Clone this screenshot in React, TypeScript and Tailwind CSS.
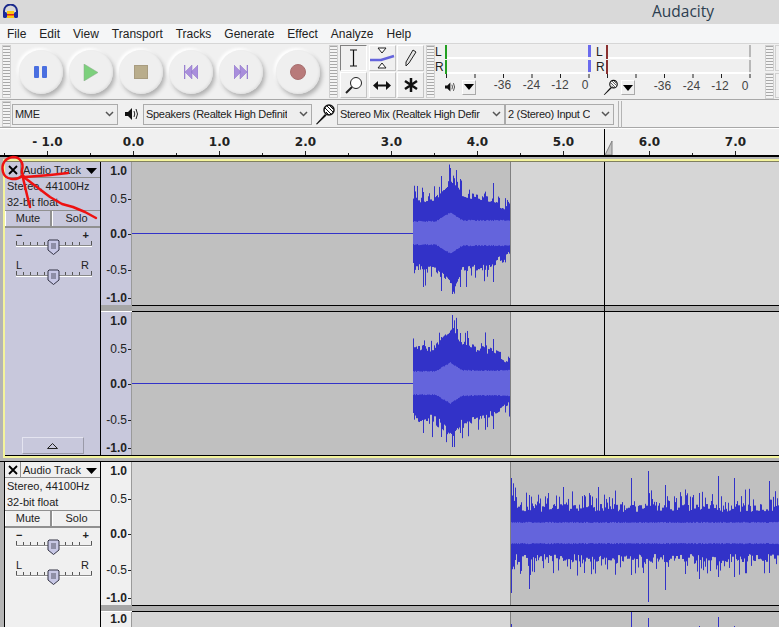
import React from 'react';

const ui = '"Liberation Sans", Arial, sans-serif';

// small deterministic random so the wave is the same every run
const rng = (seed: number) => () => {
  seed = (seed * 1664525 + 1013904223) % 4294967296;
  return seed / 4294967296;
};

type Spike = [number, number, number];

const lerp = (pts: number[][], x: number) => {
  for (let i = 1; i < pts.length; i++) {
    if (x <= pts[i][0]) {
      const t = (x - pts[i - 1][0]) / (pts[i][0] - pts[i - 1][0]);
      return pts[i - 1][1] + (pts[i][1] - pts[i - 1][1]) * t;
    }
  }
  return pts[pts.length - 1][1];
};

const buildWave = (
  from: number,
  to: number,
  mid: number,
  seed: number,
  peak: number[][],
  rms: number[][],
  chance: number,
  spikes: Spike[],
) => {
  const r = rng(seed);
  let dark = '';
  let light = '';
  let nu = 0;
  let nd = 0;
  for (let x = from; x < to; x++) {
    const p = lerp(peak, x);
    // hold the noise for two pixels, the real wave is blocky
    if (x % 2 === 0) {
      nu = r() * 8;
      nd = r() * 8;
    }
    let up = p + nu;
    let down = p + nd;
    if (r() < chance) up += r() * 16;
    if (r() < chance) down += r() * 16;
    const s = spikes.find((k) => k[0] === x);
    if (s) {
      up = s[1];
      down = s[2];
    }
    dark += `M${x + 0.5} ${mid - up}V${mid + down}`;
    const l = lerp(rms, x) + r() * 1.2;
    light += `M${x + 0.5} ${mid - l}V${mid + l}`;
  }
  return { dark, light };
};

const peak1 = [[413, 30], [435, 31], [445, 42], [453, 50], [462, 34], [490, 28], [510, 18]];
const rms1 = [[413, 11], [435, 11], [450, 20], [462, 12], [510, 12]];
const spikes1: Spike[] = [[423, 41, 54], [441, 57, 58], [450, 65, 50], [452, 50, 61], [460, 54, 54], [493, 50, 49]];
const spikes1b: Spike[] = [[423, 38, 50], [441, 46, 54], [452, 68, 64], [460, 50, 50], [493, 44, 46]];
const peak2 = [[511, 34], [516, 21], [779, 21]];
const rms2 = [[511, 10], [779, 10]];
const spikes2: Spike[] = [
  [511, 55, 60], [529, 38, 56], [548, 40, 30], [563, 46, 28], [584, 38, 40], [598, 46, 28], [631, 55, 42],
  [648, 62, 69], [665, 48, 57], [699, 40, 46], [718, 57, 44], [734, 55, 44], [769, 52, 40],
];

const Wave = ({ d }: { d: { dark: string; light: string } }) => (
  <svg className="absolute left-0 top-0" width="779" height="143" viewBox="132 0 779 143">
    <path d={d.dark} stroke="#3232c8" strokeWidth="1" fill="none" />
    <path d={d.light} stroke="#6464dc" strokeWidth="1" fill="none" />
  </svg>
);

const wave1a = buildWave(413, 510, 71, 11, peak1, rms1, 0.3, spikes1);
const wave1b = buildWave(413, 510, 71, 29, peak1, rms1, 0.3, spikes1b);
const wave2 = buildWave(511, 779, 71, 47, peak2, rms2, 0.35, spikes2);

const Gripper = ({ className = '' }: { className?: string }) => (
  <div
    className={`w-[9px] shrink-0 border border-[#d0d0d0] bg-[repeating-linear-gradient(to_bottom,#a8a8a8_0px,#a8a8a8_1px,#f4f4f4_1px,#f4f4f4_3px)] ${className}`}
  />
);

const RoundButton = ({ children, className = '' }: { children: React.ReactNode; className?: string }) => (
  <div
    className={`flex h-[44px] w-[44px] shrink-0 items-center justify-center rounded-full bg-[#efefef] shadow-[2px_3px_4px_#b0b0b0,-2px_-2px_3px_#ffffff,inset_-1px_-1px_2px_#e0e0e0] ${className}`}
  >
    {children}
  </div>
);

const ToolButton = ({ children, active }: { children: React.ReactNode; active?: boolean }) => (
  <div
    className={`flex h-[26px] w-[27px] items-center justify-center border ${
      active ? 'border-t-[#808080] border-l-[#808080] border-r-white border-b-white' : 'border-t-white border-l-white border-r-[#c4c4c4] border-b-[#c4c4c4]'
    }`}
  >
    {children}
  </div>
);

const Select = ({ label, className = '' }: { label: string; className?: string }) => (
  <div className={`flex h-[21px] shrink-0 items-center justify-between border border-[#ababab] bg-[#eeeeee] pl-[2px] pr-[3px] ${className}`}>
    <span className="overflow-hidden whitespace-nowrap text-[11px] leading-none tracking-[-0.3px] text-[#222222]">{label}</span>
    <svg width="9" height="6" viewBox="0 0 9 6" className="ml-[3px] shrink-0">
      <path d="M1 1l3.500 3.500L8 1" stroke="#555555" strokeWidth="1.500" fill="none" />
    </svg>
  </div>
);

const Speaker = () => (
  <svg width="14" height="14" viewBox="0 0 14 14">
    <path d="M0 5h3l4-4v12L3 9H0z" fill="#111111" />
    <path d="M9 4q1.500 3 0 6M11 2q3 5 0 10" stroke="#222222" fill="none" />
  </svg>
);

const Mic = () => (
  <svg width="20" height="21" viewBox="0 0 20 21">
    <path d="M1 20l9-10 1.500 1.500L2 20.500z" fill="#111111" />
    <circle cx="14" cy="6" r="5" fill="#ffffff" stroke="#111111" strokeWidth="1.500" />
    <path d="M10 4l6 6M12 2l6 6M14 1l4 4M11 8l3 3" stroke="#111111" />
  </svg>
);

const Dropdown = ({ className = '' }: { className?: string }) => (
  <div className={`flex h-[15px] w-[18px] items-center justify-center border border-t-white border-l-white border-r-[#aaaaaa] border-b-[#aaaaaa] ${className}`}>
    <svg width="10" height="6" viewBox="0 0 10 6">
      <path d="M0 0h10L5 6z" fill="#000000" />
    </svg>
  </div>
);

const MeterBars = ({ color, end }: { color: string; end?: boolean }) => (
  <div className="flex w-[157px] flex-col gap-[1px] text-[12px] leading-none text-[#222222]">
    {['L', 'R'].map((c) => (
      <div key={c} className="flex h-[14px] items-center">
        <span className="w-[10px] overflow-hidden pl-[0px]">{c}</span>
        <div className="h-[14px] w-[2px]" style={{ backgroundColor: color }} />
        <div className="h-full w-[141px] border-b-2 border-white bg-[#efefef]" />
        <div className={`h-[12px] self-start ${end ? 'w-[3px] bg-[#6a6aee]' : 'w-[2px] bg-[#b8b8b8]'}`} />
      </div>
    ))}
  </div>
);

const MeterScale = () => (
  <div className="flex pb-[4px] text-[12px] leading-none text-[#444444]">
    <span className="w-[29px] text-center">-36</span>
    <span className="w-[29px] text-center">-24</span>
    <span className="w-[28px] text-center">-12</span>
    <span className="w-[22px] text-center">0</span>
  </div>
);

const Ticks = () => (
  <svg width="144" height="4" viewBox="0 0 144 4" className="block">
    {[0, 28.500, 57, 85.500, 114, 142.500].map((x) => (
      <rect key={x} x={x} y="0" width="1" height="4" fill="#222222" />
    ))}
  </svg>
);

const seconds = ['- 1.0', '0.0', '1.0', '2.0', '3.0', '4.0', '5.0', '6.0', '7.0'];

const Ruler = () => (
  <div className="relative flex h-[27px] overflow-hidden border-t border-white bg-[#f0f0f0] pl-[4px]">
    {seconds.map((s) => (
      <div key={s} className="relative flex w-[86px] shrink-0 flex-col items-center pt-[6px] pl-[1px]">
        <span className="text-[12px] font-bold leading-[14px] text-[#222222]" style={{ fontFamily: '"DejaVu Sans", sans-serif' }}>
          {s}
        </span>
        <div className="absolute bottom-0 left-[43px] h-[4px] w-[1px] bg-[#222222]" />
        <div className="absolute bottom-0 left-0 h-[2px] w-[1px] bg-[#222222]" />
      </div>
    ))}
    <div className="absolute left-[604px] top-0 h-full w-[1px] bg-black" />
    <svg className="absolute left-[605px] top-[12px]" width="8" height="15" viewBox="0 0 8 15">
      <path d="M7 0v14H0z" fill="#c4c4c4" stroke="#808080" />
    </svg>
  </div>
);

const VRuler = ({ bg }: { bg: string }) => {
  const rows: [string, boolean, string][] = [
    ['1.0', true, 'mt-[2px]'],
    ['0.5', false, 'mt-[14px]'],
    ['0.0', true, 'mt-[21px]'],
    ['-0.5', false, 'mt-[22px]'],
    ['-1.0', true, 'mt-[14px]'],
  ];
  return (
    <div className={`h-full w-[31px] shrink-0 border-r border-[#9a9a9a] ${bg}`}>
      {rows.map(([t, bold, m]) => (
        <div key={t} className={`flex h-[14px] items-center justify-end ${m}`}>
          <span className={`text-[12px] leading-none text-[#222222] ${bold ? 'font-bold' : ''}`}>{t}</span>
          <div className={`ml-[1px] h-[1px] w-[3px] ${t === '1.0' ? '' : 'bg-[#222222]'}`} />
        </div>
      ))}
    </div>
  );
};

const Channel = ({ bg, clipLeft, wave, line }: { bg: string; clipLeft: boolean; wave?: { dark: string; light: string }; line?: boolean }) => (
  <div className="flex h-[143px] shrink-0">
    <VRuler bg={bg} />
    <div className="relative flex min-w-0 flex-1 overflow-hidden">
      <div className={`h-full w-[379px] shrink-0 border-r border-[#808080] ${clipLeft ? 'bg-[#c0c0c0]' : 'bg-[#d6d6d6]'}`} />
      <div className={`h-full flex-1 ${clipLeft ? 'bg-[#d6d6d6]' : 'bg-[#c0c0c0]'}`} />
      {line && <div className="absolute left-0 top-[71px] h-[1px] w-[281px] bg-[#3232c8]" />}
      {wave && <div className="absolute left-0 top-0"><Wave d={wave} /></div>}
    </div>
  </div>
);

const Separator = ({ bg }: { bg: string }) => (
  <div className="flex h-[7px] shrink-0">
    <div className={`h-full w-[31px] border-b border-white ${bg}`}>
      <div className="h-[6px] bg-[#a6a6a6]" />
    </div>
    <div className="h-full flex-1 border-y border-black bg-[#b0b0b0]" />
  </div>
);

const Slider = ({ left, right, bold }: { left: string; right: string; bold?: boolean }) => (
  <div className="px-[11px]">
    <div className="flex h-[13px] items-center justify-between text-[11px] leading-none text-[#222222]">
      <span className={bold ? 'font-bold' : ''}>{left}</span>
      <span className={bold ? 'font-bold' : ''}>{right}</span>
    </div>
    <svg width="76" height="17" viewBox="0 0 76 17" className="-mt-[4px] block">
      {[0, 7, 14, 21, 28, 35, 49, 56, 63, 75].map((x) => (
        <rect key={x} x={x} y={x === 0 || x === 75 ? 3 : 4} width="1" height={x === 0 || x === 75 ? 4 : 3} fill="#555555" />
      ))}
      <rect x="0" y="7" width="76" height="1" fill="#8a8a8a" />
      <rect x="0" y="8" width="76" height="1" fill="#ffffff" />
      <path d="M33 2h9l1 1v9l-5.500 4.500L32 12V3z" fill="#c8c8e6" stroke="#333344" />
      <path d="M35 6h5M35 8h5M35 10h5" stroke="#555566" />
    </svg>
  </div>
);

const TrackPanel = ({ bg, collapse }: { bg: string; collapse?: boolean }) => (
  <div className={`flex h-full w-[96px] shrink-0 flex-col border-r border-black text-[12px] leading-none text-[#222222] ${bg}`}>
    <div className="flex h-[16px] shrink-0">
      <div className="flex w-[16px] items-center justify-center border-r border-b border-[#909090]">
        <svg width="10" height="10" viewBox="0 0 10 10">
          <path d="M1 1l8 8M9 1l-8 8" stroke="#000000" strokeWidth="1.800" />
        </svg>
      </div>
      <div className="flex flex-1 items-center justify-between border-b border-[#909090] pl-[2px] pr-[3px] pt-[2px]">
        <span className="whitespace-nowrap text-[11px]">Audio Track</span>
        <svg width="11" height="6" viewBox="0 0 11 6">
          <path d="M0 0h11L5.500 6z" fill="#000000" />
        </svg>
      </div>
    </div>
    <div className="h-[33px] shrink-0 border-b border-[#909090] pl-[2px] pt-[3px]">
      <div className="h-[16px] whitespace-nowrap text-[11px]">Stereo, 44100Hz</div>
      <div className="whitespace-nowrap text-[11px]">32-bit float</div>
    </div>
    <div className="flex h-[17px] shrink-0 border-b-2 border-[#909090] text-[11px]">
      <div className="flex w-[47px] items-center justify-center border-r-2 border-[#909090] border-l border-l-white">Mute</div>
      <div className="flex flex-1 items-center justify-center border-l border-white">Solo</div>
    </div>
    <div className="mt-[1px] flex flex-col gap-[4px]">
      <Slider left="−" right="+" bold />
      <Slider left="L" right="R" />
    </div>
    {collapse && (
      <div className="mt-auto mb-[1px] flex h-[17px] w-[62px] shrink-0 items-center justify-center self-center border border-[#e4e4f0] border-r-[#9a9aa8] border-b-[#9a9aa8]">
        <svg width="11" height="6" viewBox="0 0 11 6">
          <path d="M5.500 .5L10.500 5.500H.5z" fill="none" stroke="#222222" />
        </svg>
      </div>
    )}
  </div>
);

export default function App() {
  return (
    <div className="relative h-[627px] w-[779px] overflow-hidden bg-[#f0f0f0]" style={{ fontFamily: ui }}>
      {/* Title bar */}
      <div className="flex h-[24px] items-center bg-[#d9d9d9] pl-[3px]">
        <svg width="15" height="16" viewBox="0 0 15 16">
          <path d="M1 10V7a6.500 6.500 0 0 1 13 0v3" stroke="#1a2a8c" strokeWidth="2" fill="none" />
          <rect x="0" y="8" width="4" height="6" rx="1.500" fill="#1a2a9c" />
          <rect x="11" y="8" width="4" height="6" rx="1.500" fill="#1a2a9c" />
          <rect x="4" y="7" width="7" height="7" fill="#f8c810" />
          <rect x="4" y="10" width="7" height="1.500" fill="#e02020" />
        </svg>
        <span className="ml-[634px] text-[15.500px] leading-none text-[#2c3e50]" style={{ fontFamily: '"Open Sans", sans-serif' }}>
          Audacity
        </span>
      </div>

      {/* Menu bar */}
      <div className="flex h-[20px] items-center gap-[13px] border-b border-[#d6d6d6] bg-[#f5f6f7] pl-[7px] text-[12px] leading-none text-[#222222]">
        {['File', 'Edit', 'View', 'Transport', 'Tracks', 'Generate', 'Effect', 'Analyze', 'Help'].map((m) => (
          <span key={m}>{m}</span>
        ))}
      </div>

      {/* Transport, tools and meters */}
      <div className="flex h-[56px] items-stretch border-b border-[#a8a8a8] bg-[#f0f0f0] py-[1px]">
        <Gripper className="ml-[2px]" />
        <div className="flex w-[318px] shrink-0 items-center pl-[8px] pt-[1px]">
          <RoundButton>
            <svg width="14" height="14" viewBox="0 0 14 14">
              <rect x="0" y="1" width="5" height="12" rx="1" fill="#4a6fe0" />
              <rect x="8" y="1" width="5" height="12" rx="1" fill="#4a6fe0" />
            </svg>
          </RoundButton>
          <RoundButton className="ml-[6px]">
            <svg width="16" height="17" viewBox="0 0 16 17">
              <path d="M1 0l14 8.500L1 17z" fill="#7cd07c" stroke="#8aa88a" strokeWidth=".5" />
            </svg>
          </RoundButton>
          <RoundButton className="ml-[6px]">
            <svg width="14" height="14" viewBox="0 0 14 14">
              <rect x=".5" y=".5" width="13" height="13" fill="#b9ad8c" stroke="#a89c80" />
            </svg>
          </RoundButton>
          <RoundButton className="ml-[6px]">
            <svg width="14" height="14" viewBox="0 0 14 14">
              <path d="M0 0h1v14H0zM8 0v14L1 7zM14 0v14L7 7z" fill="#a98edc" stroke="#8a72c4" strokeWidth=".5" />
            </svg>
          </RoundButton>
          <RoundButton className="ml-[6px]">
            <svg width="14" height="14" viewBox="0 0 14 14">
              <path d="M13 0h1v14h-1zM6 0v14l7-7zM0 0v14l7-7z" fill="#a98edc" stroke="#8a72c4" strokeWidth=".5" />
            </svg>
          </RoundButton>
          <RoundButton className="ml-[13px]">
            <svg width="16" height="16" viewBox="0 0 16 16">
              <circle cx="8" cy="8" r="7.500" fill="#b87a7a" stroke="#a87070" />
            </svg>
          </RoundButton>
        </div>
        <Gripper />
        <div className="ml-[2px] grid w-[85px] shrink-0 grid-cols-3 gap-[1px]">
          <ToolButton active>
            <svg width="11" height="18" viewBox="0 0 11 18">
              <path d="M2 1h7M2 17h7M5.500 1v16" stroke="#111111" strokeWidth="1.200" fill="none" />
            </svg>
          </ToolButton>
          <ToolButton>
            <svg width="25" height="22" viewBox="0 0 25 22">
              <path d="M8 1h8l-4 5zM8 21h8l-4-5z" fill="#ffffff" stroke="#222222" />
              <path d="M0 13h11l13-4" stroke="#6464dc" strokeWidth="2.500" fill="none" />
            </svg>
          </ToolButton>
          <ToolButton>
            <svg width="12" height="18" viewBox="0 0 12 18">
              <path d="M8 1l3 2-7 11-3 3 0-4z" fill="#e4e4e4" stroke="#222222" />
            </svg>
          </ToolButton>
          <ToolButton>
            <svg width="18" height="18" viewBox="0 0 18 18">
              <circle cx="11" cy="7" r="5.500" fill="#ffffff" stroke="#222222" />
              <path d="M7 11l-6 6" stroke="#222222" strokeWidth="2" />
            </svg>
          </ToolButton>
          <ToolButton>
            <svg width="18" height="9" viewBox="0 0 18 9">
              <path d="M0 4.500L5 0v3.500h8V0l5 4.500L13 9V5.500H5V9z" fill="#111111" />
            </svg>
          </ToolButton>
          <ToolButton>
            <svg width="14" height="14" viewBox="0 0 14 14">
              <path d="M7 0v14M1 3l12 8M13 3L1 11" stroke="#111111" strokeWidth="2.500" />
            </svg>
          </ToolButton>
        </div>
        <Gripper className="ml-[1px]" />
        <div className="flex w-[330px] shrink-0">
          <div className="w-[161px] shrink-0">
            <MeterBars color="#22a022" end />
            <div className="ml-[11px]"><Ticks /></div>
            <div className="mt-[1px] flex items-center pl-[10px]">
              <Speaker />
              <Dropdown className="ml-[6px]" />
              <div className="ml-[12px]"><MeterScale /></div>
            </div>
          </div>
          <div className="w-[160px] shrink-0">
            <MeterBars color="#8a3030" />
            <div className="ml-[11px]"><Ticks /></div>
            <div className="mt-[-1px] flex items-center pl-[7px]">
              <Mic />
              <Dropdown className="ml-[3px]" />
              <div className="ml-[13px]"><MeterScale /></div>
            </div>
          </div>
        </div>
        <div className="flex flex-col gap-[2px]">
          <Gripper className="h-[26px]" />
          <Gripper className="h-[26px]" />
        </div>
        <div className="flex flex-col gap-[2px] pl-[1px]">
          <div className="h-[26px] w-[8px] border border-[#d0d0d0]" />
          <div className="h-[26px] w-[8px] border border-[#d0d0d0]" />
        </div>
      </div>

      {/* Device toolbar */}
      <div className="flex h-[28px] items-center border-b border-[#a8a8a8] bg-[#f0f0f0] pt-[1px] text-[12px]">
        <Gripper className="ml-[2px] h-[26px]" />
        <Select label="MME" className="ml-[1px] w-[106px]" />
        <div className="ml-[7px] w-[18px] shrink-0"><Speaker /></div>
        <Select label="Speakers (Realtek High Definit" className="w-[169px]" />
        <div className="ml-[3px] w-[22px] shrink-0"><Mic /></div>
        <Select label="Stereo Mix (Realtek High Defir" className="w-[168px]" />
        <Select label="2 (Stereo) Input C" className="w-[109px]" />
        <div className="ml-[4px] h-[27px] w-[4px] border-x border-[#b4b4b4]" />
      </div>

      <Ruler />

      {/* Track area */}
      <div className="flex h-[472px] flex-col bg-[#b4b4b4]">
        <div className="h-[2px] shrink-0 bg-black" />
        <div className="h-[2px] shrink-0" />

        <div className="relative ml-[3px] shrink-0 border-y-[3px] border-l-[2px] border-[#f4f49c]">
          <div className="flex h-[293px] shadow-[0_-1px_0_#808060,0_1px_0_#000000]">
            <TrackPanel bg="bg-[#c8c8dc]" collapse />
            <div className="flex min-w-0 flex-1 flex-col">
              <Channel bg="bg-[#c8c8dc]" clipLeft wave={wave1a} line />
              <Separator bg="bg-[#c8c8dc]" />
              <Channel bg="bg-[#c8c8dc]" clipLeft wave={wave1b} line />
            </div>
          </div>
          {/* edit cursor */}
          <div className="absolute left-[599px] top-0 h-[293px] w-[1px] bg-black" />
        </div>

        <div className="h-[3px] shrink-0" />
        <div className="h-[1px] shrink-0 bg-black" />

        <div className="ml-[4px] flex min-h-0 flex-1 border-l border-black">
          <TrackPanel bg="bg-[#f0f0f0]" />
          <div className="flex min-w-0 flex-1 flex-col">
            <Channel bg="bg-[#f0f0f0]" clipLeft={false} wave={wave2} />
            <Separator bg="bg-[#f0f0f0]" />
            <div className="flex h-[16px] shrink-0">
              <div className="h-full w-[31px] border-r border-[#9a9a9a] bg-[#f0f0f0]">
                <div className="pr-[4px] text-right text-[12px] font-bold leading-[14px] text-[#222222]">1.0</div>
              </div>
              <div className="relative flex-1 overflow-hidden">
                <div className="flex h-full">
                  <div className="h-full w-[379px] border-r border-[#808080] bg-[#d6d6d6]" />
                  <div className="h-full flex-1 bg-[#c0c0c0]" />
                </div>
                <svg className="absolute left-0 top-0" width="647" height="16" viewBox="132 0 647 16">
                  <path d="M631.500 0V16M648.500 6V16M718.500 5V16M734.500 14V16M699.500 14V16M511.500 12V16" stroke="#3232c8" fill="none" />
                </svg>
              </div>
            </div>
          </div>
        </div>
      </div>

      {/* Hand-drawn red marks over the first track */}
      <svg className="absolute left-0 top-0" width="779" height="627" viewBox="0 0 779 627">
        <path
          d="M22 176C16 181 5 180 3 172C1 164 5 158 13 157C20 157 24 163 22 170C21 174 23 176 25 178L50 197L62 204L73 207L85 212L96 218M25 177L50 175L68 173M23 178L27 195L30 207"
          stroke="#ee1111"
          strokeWidth="2.500"
          fill="none"
          strokeLinecap="round"
          strokeLinejoin="round"
        />
      </svg>
    </div>
  );
}
